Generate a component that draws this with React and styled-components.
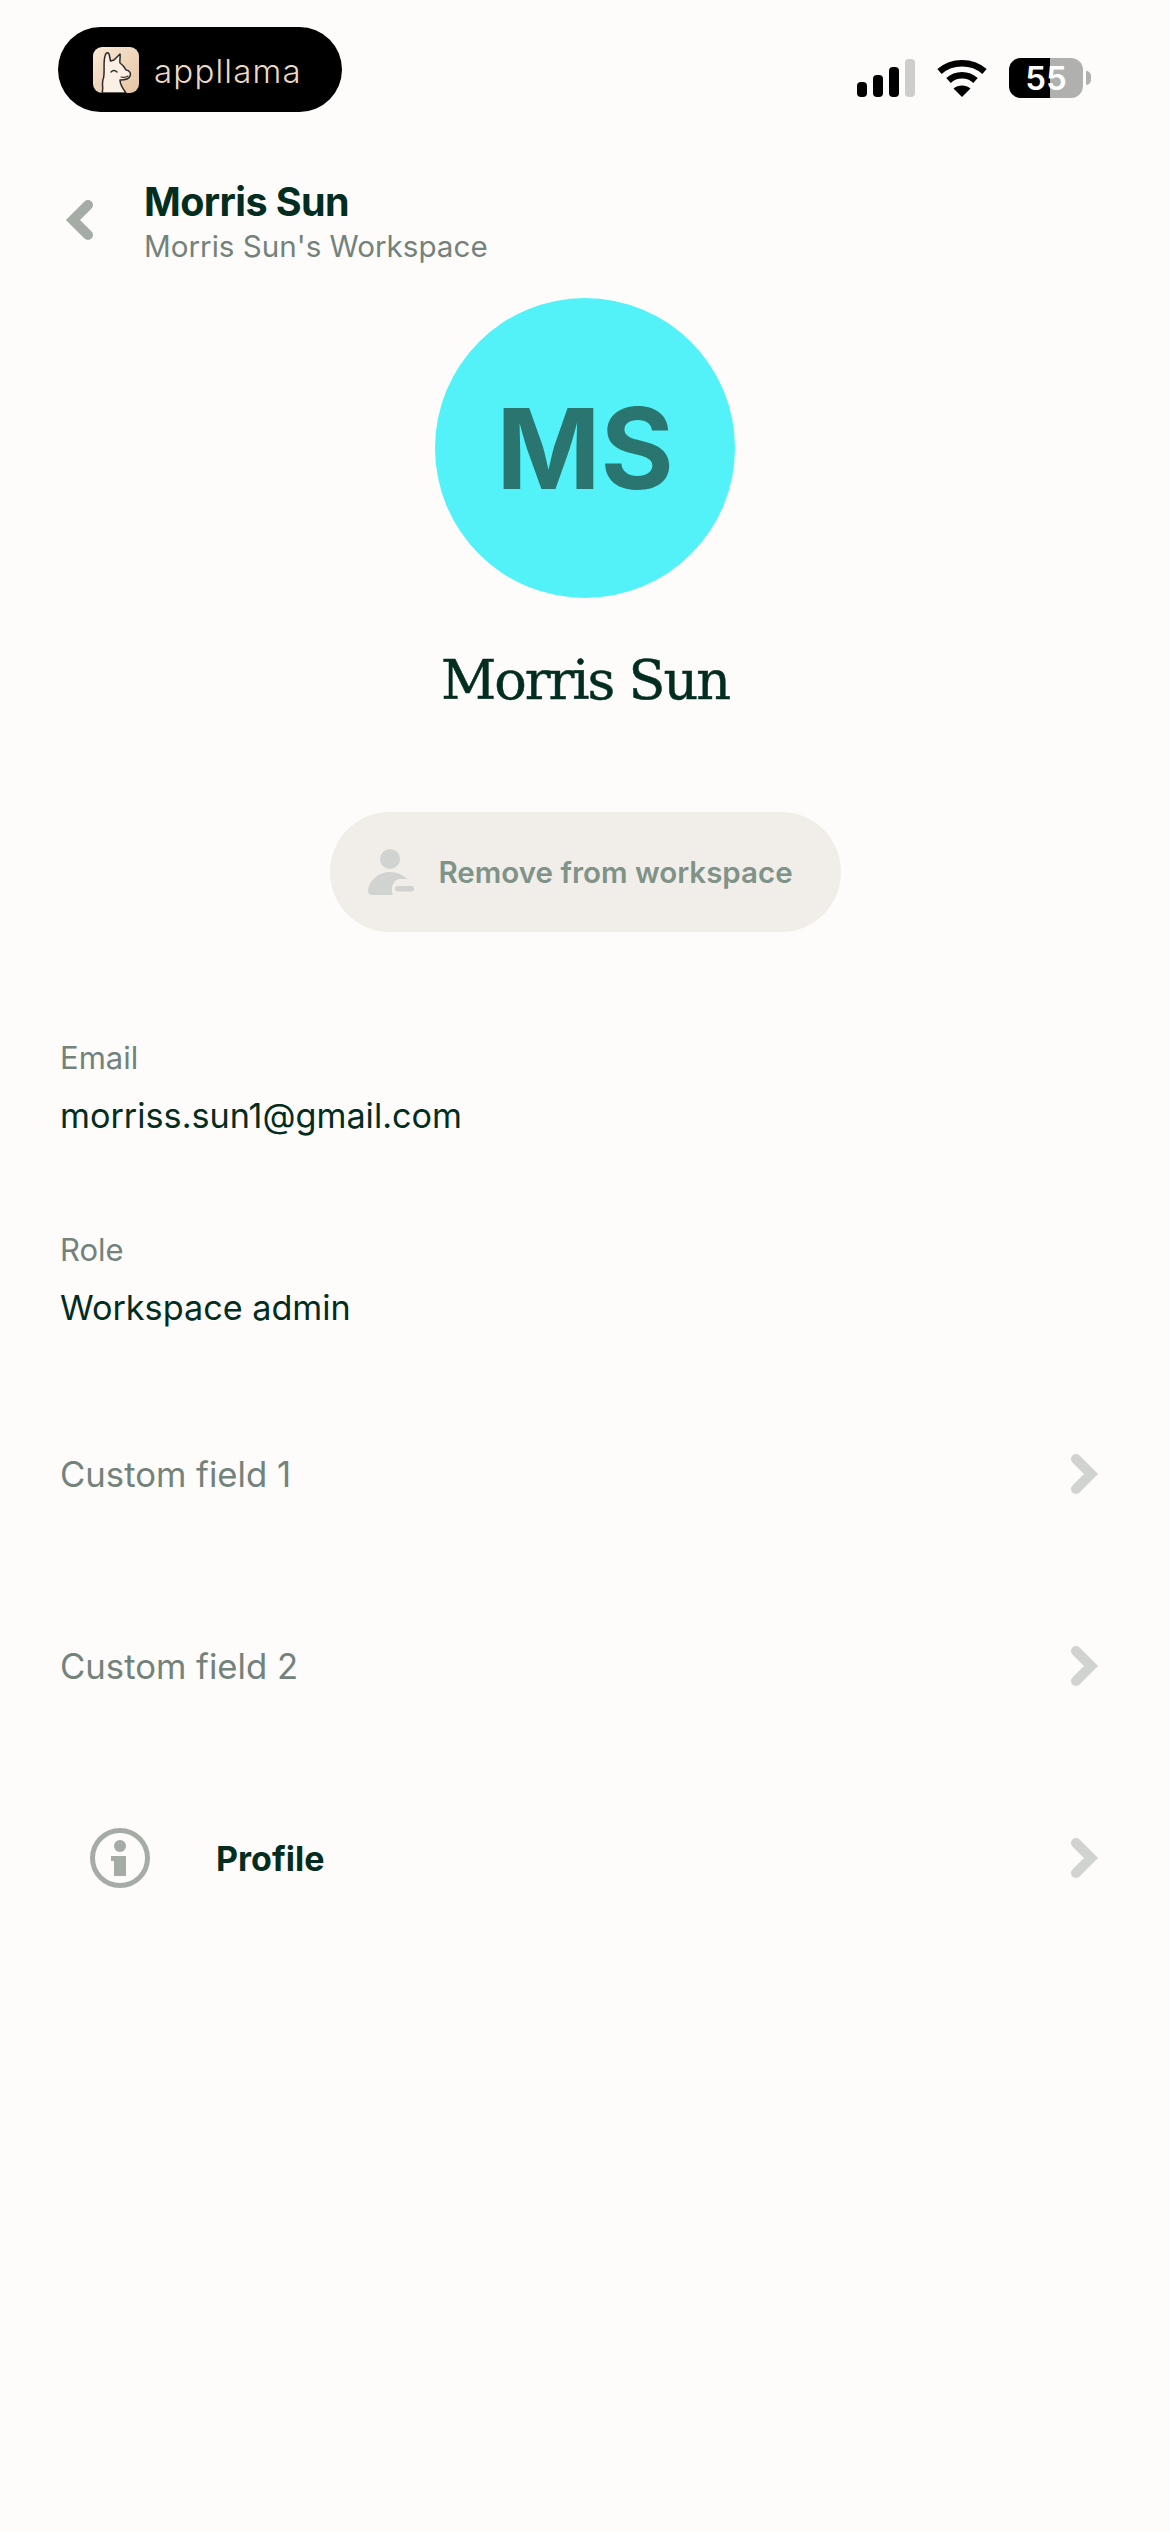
import styled, { createGlobalStyle } from "styled-components";

const GlobalStyle = createGlobalStyle`
  html, body {
    margin: 0;
    padding: 0;
    background: #fdfcfa;
  }
  * {
    box-sizing: border-box;
  }
`;

const Chevron = ({ left, color }) => (
  <ChevronSvg viewBox="0 0 30 42" fill="none">
    <path
      d={left ? "M23 6 L8 21 L23 36" : "M7 6 L22 21 L7 36"}
      stroke={color}
      strokeWidth="10"
      strokeLinecap="round"
      strokeLinejoin="miter"
    />
  </ChevronSvg>
);

const LlamaIcon = () => (
  <svg width="46" height="46" viewBox="0 0 46 46">
    <defs>
      <linearGradient id="tile" x1="0" y1="0" x2="1" y2="1">
        <stop offset="0" stopColor="#f9e9d8" />
        <stop offset="1" stopColor="#e6c4a0" />
      </linearGradient>
    </defs>
    <rect width="46" height="46" rx="9" fill="url(#tile)" />
    <path
      d="M9 46 C11 41 8 36 10.5 31 C12 25 10 16 12 9 C13 4.5 16 4.5 16.5 9 L17.5 14 L21 13 L27 7 C27.5 10 26.5 13 27 16 C30 18 32 21 33 23 C37 23 38 27 37 29 C36 32 31 33 27 33 C27 38 30 42 33 46 Z"
      fill="#fbf0e3"
      stroke="#2b2a28"
      strokeWidth="1.5"
      strokeLinejoin="round"
    />
    <path d="M18 25 Q21 22 24 25" stroke="#2b2a28" strokeWidth="1.4" fill="none" strokeLinecap="round" />
    <path d="M28 30 Q32 31 35 29" stroke="#2b2a28" strokeWidth="1.1" fill="none" strokeLinecap="round" />
  </svg>
);

const SignalIcon = () => (
  <svg width="58" height="38" viewBox="0 0 58 38">
    <rect x="0" y="23" width="10" height="15" rx="4" fill="#000" />
    <rect x="16" y="16" width="10" height="22" rx="4" fill="#000" />
    <rect x="32" y="8" width="10" height="30" rx="4" fill="#000" />
    <rect x="48" y="0" width="10" height="38" rx="4" fill="#cdcdcb" />
  </svg>
);

const WifiIcon = () => (
  <svg width="50" height="38" viewBox="0 0 50 38" fill="none">
    <path d="M2.5 12.5 C15 1.5 35 1.5 47.5 12.5" stroke="#000" strokeWidth="6.5" strokeLinejoin="round" />
    <path d="M11.5 21.5 C19 14.5 31 14.5 38.5 21.5" stroke="#000" strokeWidth="6.5" />
    <path d="M25 38 L16.5 29.5 C21 25.5 29 25.5 33.5 29.5 Z" fill="#000" />
  </svg>
);

const PersonRemoveIcon = () => (
  <svg width="46" height="46" viewBox="0 0 46 46">
    <circle cx="22" cy="10" r="10" fill="#d0d3d0" />
    <path
      d="M4 46 C1 46 0 44 0 42 C1 31 11 23 22 23 C29 23 35 26 39 30 L31 30 C25 31 22 40 25 46 Z"
      fill="#d0d3d0"
    />
    <rect x="27" y="37" width="19" height="5.5" rx="2.75" fill="#d0d3d0" />
  </svg>
);

const InfoIcon = () => (
  <svg width="60" height="60" viewBox="0 0 60 60">
    <circle cx="30" cy="30" r="27.5" fill="none" stroke="#a5aca6" strokeWidth="5" />
    <circle cx="30" cy="18" r="6" fill="#a5aca6" />
    <path d="M21 28 H36 V48 H24 V33 H21 Z" fill="#a5aca6" />
  </svg>
);

const App = () => {
  return (
    <Page>
      <GlobalStyle />
      <StatusBar>
        <LogoPill>
          <LlamaIcon />
          <LogoText>appllama</LogoText>
        </LogoPill>
        <StatusIcons>
          <SignalIcon />
          <WifiIcon />
          <Battery>
            <BatteryBody>
              <BatteryFill />
              <BatteryLevel>55</BatteryLevel>
            </BatteryBody>
            <BatteryTip />
          </Battery>
        </StatusIcons>
      </StatusBar>

      <Header>
        <BackButton>
          <Chevron left color="#a5aca6" />
        </BackButton>
        <div>
          <HeaderTitle>Morris Sun</HeaderTitle>
          <HeaderSub>Morris Sun's Workspace</HeaderSub>
        </div>
      </Header>

      <ProfileBlock>
        <Avatar>MS</Avatar>
        <ProfileName>Morris Sun</ProfileName>
        <RemoveButton>
          <PersonRemoveIcon />
          <RemoveLabel>Remove from workspace</RemoveLabel>
        </RemoveButton>
      </ProfileBlock>

      <Fields>
        <Field>
          <FieldLabel>Email</FieldLabel>
          <FieldValue>morriss.sun1@gmail.com</FieldValue>
        </Field>
        <Field>
          <FieldLabel>Role</FieldLabel>
          <FieldValue>Workspace admin</FieldValue>
        </Field>
        <LinkRow>
          <LinkText>Custom field 1</LinkText>
          <Chevron color="#d0d3d0" />
        </LinkRow>
        <LinkRow>
          <LinkText>Custom field 2</LinkText>
          <Chevron color="#d0d3d0" />
        </LinkRow>
        <LinkRow>
          <ProfileLink>
            <InfoIcon />
            <ProfileText>Profile</ProfileText>
          </ProfileLink>
          <Chevron color="#d0d3d0" />
        </LinkRow>
      </Fields>
    </Page>
  );
};

export default App;

const Page = styled.div`
  width: 1170px;
  height: 2532px;
  background: #fdfcfa;
  font-family: "Inter", "Noto Sans", sans-serif;
  overflow: hidden;
`;

const StatusBar = styled.div`
  display: flex;
  justify-content: space-between;
  align-items: center;
  padding: 27px 79px 0 58px;
`;

const LogoPill = styled.div`
  width: 284px;
  height: 85px;
  border-radius: 43px;
  background: #000;
  display: flex;
  align-items: center;
  padding-left: 35px;
  gap: 15px;
`;

const LogoText = styled.span`
  font-family: "Inter", sans-serif;
  font-weight: 300;
  font-size: 33px;
  color: #ecd9c4;
  letter-spacing: 1.2px;
  margin-top: 2px;
`;

const StatusIcons = styled.div`
  display: flex;
  align-items: center;
  gap: 22px;
  margin-top: 16px;
`;

const Battery = styled.div`
  display: flex;
  align-items: center;
  gap: 3px;
`;

const BatteryBody = styled.div`
  position: relative;
  width: 74px;
  height: 40px;
  border-radius: 12px;
  background: #b0b0ae;
  overflow: hidden;
  display: flex;
  align-items: center;
  justify-content: center;
`;

const BatteryFill = styled.div`
  position: absolute;
  left: 0;
  top: 0;
  bottom: 0;
  width: 41px;
  background: #000;
`;

const BatteryLevel = styled.span`
  position: relative;
  font-family: "Inter", sans-serif;
  font-weight: 600;
  font-size: 33px;
  line-height: 40px;
  color: #fff;
`;

const BatteryTip = styled.div`
  width: 5px;
  height: 14px;
  border-radius: 0 7px 7px 0;
  background: #b0b0ae;
`;

const Header = styled.div`
  display: flex;
  align-items: center;
  margin-top: 67px;
  padding-left: 65px;
`;

const BackButton = styled.div`
  width: 79px;
  display: flex;
  align-items: center;
  margin-top: -6px;
`;

const ChevronSvg = styled.svg`
  width: 30px;
  height: 42px;
  display: block;
`;

const HeaderTitle = styled.div`
  font-weight: 700;
  font-size: 39.5px;
  line-height: 46px;
  color: #032d21;
  letter-spacing: -0.6px;
`;

const HeaderSub = styled.div`
  font-weight: 400;
  font-size: 29.6px;
  line-height: 42px;
  color: #73827b;
`;

const ProfileBlock = styled.div`
  display: flex;
  flex-direction: column;
  align-items: center;
  margin-top: 31px;
`;

const Avatar = styled.div`
  width: 300px;
  height: 300px;
  border-radius: 50%;
  background: #52f2f8;
  color: #2a756f;
  font-weight: 700;
  font-size: 112px;
  display: flex;
  align-items: center;
  justify-content: center;
`;

const ProfileName = styled.div`
  margin-top: 48px;
  font-family: "DejaVu Serif", serif;
  font-size: 54px;
  line-height: 70px;
  letter-spacing: -2px;
  color: #032d21;
  -webkit-text-stroke: 0.5px #032d21;
`;

const RemoveButton = styled.div`
  margin-top: 96px;
  width: 511px;
  height: 120px;
  border-radius: 60px;
  background: #f1eee9;
  display: flex;
  align-items: center;
  padding-left: 38px;
  gap: 25px;
`;

const RemoveLabel = styled.span`
  font-weight: 600;
  font-size: 29.5px;
  color: #7f9389;
`;

const Fields = styled.div`
  display: flex;
  flex-direction: column;
  gap: 88px;
  padding: 0 71px 0 60px;
  margin-top: 106px;
`;

const Field = styled.div`
  height: 104px;
  display: flex;
  flex-direction: column;
`;

const FieldLabel = styled.div`
  font-size: 31px;
  line-height: 40px;
  color: #73827b;
`;

const FieldValue = styled.div`
  margin-top: 16px;
  font-size: 34.2px;
  line-height: 44px;
  color: #032d21;
`;

const LinkRow = styled.div`
  height: 104px;
  display: flex;
  align-items: center;
  justify-content: space-between;
`;

const LinkText = styled.span`
  font-size: 34.7px;
  color: #73827b;
`;

const ProfileLink = styled.div`
  display: flex;
  align-items: center;
  gap: 66px;
  padding-left: 30px;
`;

const ProfileText = styled.span`
  font-weight: 700;
  font-size: 34px;
  color: #032d21;
`;
